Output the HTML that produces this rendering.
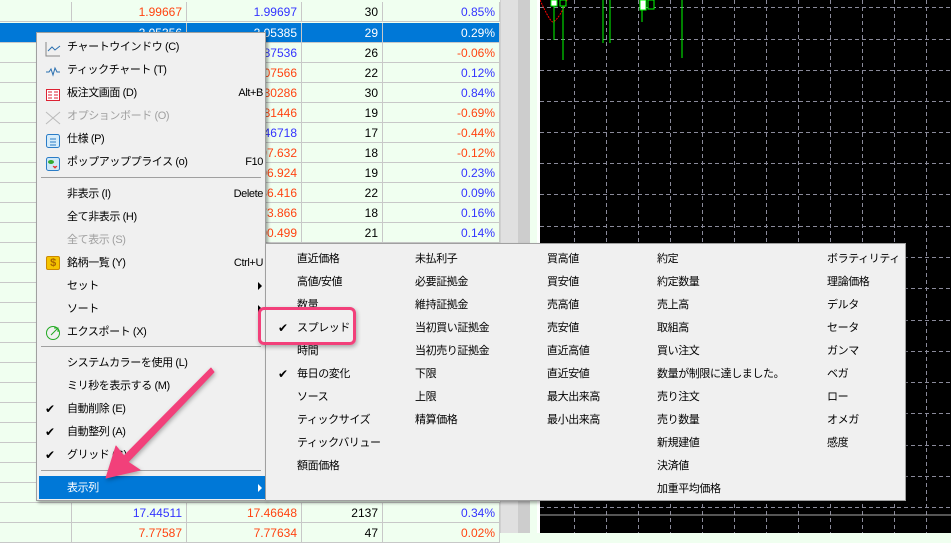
<!DOCTYPE html>
<html><head><meta charset="utf-8"><style>
*{margin:0;padding:0;box-sizing:border-box}
body{width:951px;height:533px;overflow:hidden;position:relative;background:#f0fff0;font-family:"Liberation Sans","Noto Sans CJK JP",sans-serif;font-size:12px;color:#000}
.row{position:absolute;left:0;width:500px;height:20px;border-bottom:1px solid #c8c8c8}
.c{position:absolute;top:0;height:20px;line-height:20px;text-align:right;border-right:1px solid #c8c8c8}
.r{color:#f41}.b{color:#33f}
.sel{background:#0078d7;color:#fff}
.sel .c{color:#fff}
#sb{position:absolute;left:500px;top:0;width:30px;height:533px;background:#e0e0e0;border-left:1px solid #d0d0d0}
#sb2{position:absolute;left:518px;top:0;width:12px;height:533px;background:#cdcdcd}
#chart{position:absolute;left:537px;top:0;width:414px;height:533px;background:#000;border-left:3px solid #fff}
.menu{position:absolute;background:#f0f0f0;border:1px solid #a0a0a0;box-shadow:2px 2px 3px rgba(0,0,0,.35);font-size:11px;letter-spacing:-0.4px}
.mi{position:absolute;height:22px;line-height:22px;white-space:nowrap}
.dis{color:#a0a0a0}
.sep{position:absolute;left:4px;right:4px;height:1px;background:#a0a0a0}
.sc{position:absolute;text-align:right}
.arr{position:absolute;width:0;height:0;border-top:4px solid transparent;border-bottom:4px solid transparent;border-left:4px solid #000}
.ck{position:absolute;font-size:12px}
.si{position:absolute;height:22px;line-height:22px;white-space:nowrap}
</style></head><body>

<div class="row" style="top:2px"><div class="c r" style="left:72px;width:115px;padding-right:4px">1.99667</div><div class="c b" style="left:187px;width:115px;padding-right:4px">1.99697</div><div class="c" style="left:302px;width:81px;padding-right:4px">30</div><div class="c b" style="left:383px;width:117px;padding-right:4px">0.85%</div><div class="c" style="left:0;width:72px"></div></div>
<div class="row sel" style="top:23px"><div class="c" style="left:72px;width:115px;padding-right:4px">2.05356</div><div class="c" style="left:187px;width:115px;padding-right:4px">2.05385</div><div class="c" style="left:302px;width:81px;padding-right:4px">29</div><div class="c" style="left:383px;width:117px;padding-right:4px">0.29%</div></div>
<div class="row" style="top:43px"><div class="c" style="left:0;width:72px"></div><div class="c" style="left:72px;width:115px"></div><div class="c b" style="left:187px;width:115px;padding-right:4px">1.87536</div><div class="c" style="left:302px;width:81px;padding-right:4px">26</div><div class="c r" style="left:383px;width:117px;padding-right:4px">-0.06%</div></div>
<div class="row" style="top:63px"><div class="c" style="left:0;width:72px"></div><div class="c" style="left:72px;width:115px"></div><div class="c r" style="left:187px;width:115px;padding-right:4px">1.07566</div><div class="c" style="left:302px;width:81px;padding-right:4px">22</div><div class="c b" style="left:383px;width:117px;padding-right:4px">0.12%</div></div>
<div class="row" style="top:83px"><div class="c" style="left:0;width:72px"></div><div class="c" style="left:72px;width:115px"></div><div class="c r" style="left:187px;width:115px;padding-right:4px">2.30286</div><div class="c" style="left:302px;width:81px;padding-right:4px">30</div><div class="c b" style="left:383px;width:117px;padding-right:4px">0.84%</div></div>
<div class="row" style="top:103px"><div class="c" style="left:0;width:72px"></div><div class="c" style="left:72px;width:115px"></div><div class="c r" style="left:187px;width:115px;padding-right:4px">0.81446</div><div class="c" style="left:302px;width:81px;padding-right:4px">19</div><div class="c r" style="left:383px;width:117px;padding-right:4px">-0.69%</div></div>
<div class="row" style="top:123px"><div class="c" style="left:0;width:72px"></div><div class="c" style="left:72px;width:115px"></div><div class="c b" style="left:187px;width:115px;padding-right:4px">0.46718</div><div class="c" style="left:302px;width:81px;padding-right:4px">17</div><div class="c r" style="left:383px;width:117px;padding-right:4px">-0.44%</div></div>
<div class="row" style="top:143px"><div class="c" style="left:0;width:72px"></div><div class="c" style="left:72px;width:115px"></div><div class="c r" style="left:187px;width:115px;padding-right:4px">97.632</div><div class="c" style="left:302px;width:81px;padding-right:4px">18</div><div class="c r" style="left:383px;width:117px;padding-right:4px">-0.12%</div></div>
<div class="row" style="top:163px"><div class="c" style="left:0;width:72px"></div><div class="c" style="left:72px;width:115px"></div><div class="c r" style="left:187px;width:115px;padding-right:4px">106.924</div><div class="c" style="left:302px;width:81px;padding-right:4px">19</div><div class="c b" style="left:383px;width:117px;padding-right:4px">0.23%</div></div>
<div class="row" style="top:183px"><div class="c" style="left:0;width:72px"></div><div class="c" style="left:72px;width:115px"></div><div class="c r" style="left:187px;width:115px;padding-right:4px">186.416</div><div class="c" style="left:302px;width:81px;padding-right:4px">22</div><div class="c b" style="left:383px;width:117px;padding-right:4px">0.09%</div></div>
<div class="row" style="top:203px"><div class="c" style="left:0;width:72px"></div><div class="c" style="left:72px;width:115px"></div><div class="c r" style="left:187px;width:115px;padding-right:4px">173.866</div><div class="c" style="left:302px;width:81px;padding-right:4px">18</div><div class="c b" style="left:383px;width:117px;padding-right:4px">0.16%</div></div>
<div class="row" style="top:223px"><div class="c" style="left:0;width:72px"></div><div class="c" style="left:72px;width:115px"></div><div class="c r" style="left:187px;width:115px;padding-right:4px">200.499</div><div class="c" style="left:302px;width:81px;padding-right:4px">21</div><div class="c b" style="left:383px;width:117px;padding-right:4px">0.14%</div></div>
<div class="row" style="top:243px"></div><div class="row" style="top:263px"></div><div class="row" style="top:283px"></div><div class="row" style="top:303px"></div><div class="row" style="top:323px"></div><div class="row" style="top:343px"></div><div class="row" style="top:363px"></div><div class="row" style="top:383px"></div><div class="row" style="top:403px"></div><div class="row" style="top:423px"></div><div class="row" style="top:443px"></div><div class="row" style="top:463px"></div><div class="row" style="top:483px"></div>
<div class="row" style="top:503px"><div class="c" style="left:0;width:72px"></div><div class="c b" style="left:72px;width:115px;padding-right:4px">17.44511</div><div class="c r" style="left:187px;width:115px;padding-right:4px">17.46648</div><div class="c" style="left:302px;width:81px;padding-right:4px">2137</div><div class="c b" style="left:383px;width:117px;padding-right:4px">0.34%</div></div>
<div class="row" style="top:523px"><div class="c" style="left:0;width:72px"></div><div class="c r" style="left:72px;width:115px;padding-right:4px">7.77587</div><div class="c r" style="left:187px;width:115px;padding-right:4px">7.77634</div><div class="c" style="left:302px;width:81px;padding-right:4px">47</div><div class="c r" style="left:383px;width:117px;padding-right:4px">0.02%</div></div>

<div id="sb"></div><div id="sb2"></div>

<div id="chart">
<svg width="414" height="533" style="position:absolute;left:0;top:0">
<g stroke="#8a8a9a" stroke-width="1" stroke-dasharray="4,3">
<line x1="0" y1="7.5" x2="414" y2="7.5"/><line x1="0" y1="39.5" x2="414" y2="39.5"/><line x1="0" y1="70.5" x2="414" y2="70.5"/><line x1="0" y1="101.5" x2="414" y2="101.5"/><line x1="0" y1="132.5" x2="414" y2="132.5"/><line x1="0" y1="163.5" x2="414" y2="163.5"/><line x1="0" y1="194.5" x2="414" y2="194.5"/><line x1="0" y1="226.5" x2="414" y2="226.5"/><line x1="0" y1="257.5" x2="414" y2="257.5"/><line x1="0" y1="288.5" x2="414" y2="288.5"/><line x1="0" y1="320.5" x2="414" y2="320.5"/><line x1="0" y1="351.5" x2="414" y2="351.5"/><line x1="0" y1="382.5" x2="414" y2="382.5"/><line x1="0" y1="413.5" x2="414" y2="413.5"/><line x1="0" y1="445.5" x2="414" y2="445.5"/><line x1="0" y1="476.5" x2="414" y2="476.5"/><line x1="0" y1="507.5" x2="414" y2="507.5"/>
<line x1="34.5" y1="0" x2="34.5" y2="533"/><line x1="66.5" y1="0" x2="66.5" y2="533"/><line x1="98.5" y1="0" x2="98.5" y2="533"/><line x1="130.5" y1="0" x2="130.5" y2="533"/><line x1="162.5" y1="0" x2="162.5" y2="533"/><line x1="194.5" y1="0" x2="194.5" y2="533"/><line x1="226.5" y1="0" x2="226.5" y2="533"/><line x1="258.5" y1="0" x2="258.5" y2="533"/><line x1="290.5" y1="0" x2="290.5" y2="533"/><line x1="322.5" y1="0" x2="322.5" y2="533"/><line x1="354.5" y1="0" x2="354.5" y2="533"/><line x1="386.5" y1="0" x2="386.5" y2="533"/>
</g>
<line x1="0" y1="515" x2="414" y2="515" stroke="#aaa"/>
<path d="M0 0 Q10 22 13 22 Q20 18 27 0" stroke="#f00" fill="none" stroke-dasharray="2,1"/>
<g stroke="#0f0" fill="#fff"><line x1="14" y1="0" x2="14" y2="40"/><line x1="23" y1="0" x2="23" y2="60"/><line x1="63" y1="0" x2="63" y2="43"/><line x1="70" y1="0" x2="70" y2="43"/><line x1="102" y1="0" x2="102" y2="22"/><line x1="142" y1="0" x2="142" y2="58"/><rect x="11" y="0" width="6" height="6"/><rect x="20" y="0" width="6" height="6" fill="#000"/><rect x="100" y="0" width="6" height="10"/><rect x="108" y="0" width="6" height="9" fill="#000"/></g>
</svg>
</div>

<div class="menu" style="left:36px;top:32px;width:230px;height:469px">
 <svg style="position:absolute;left:8px;top:8px" width="16" height="16"><path d="M1 1V15H15" stroke="#888" fill="none"/><path d="M3 10L7 6L10 9L15 5" stroke="#2a6fb0" fill="none"/></svg>
 <div class="mi" style="left:30px;top:3px">チャートウインドウ (C)</div>
 <svg style="position:absolute;left:8px;top:31px" width="16" height="16"><path d="M1 8H4L6 5L8 11L10 4L12 8H15" stroke="#2a6fb0" fill="none"/></svg>
 <div class="mi" style="left:30px;top:26px">ティックチャート (T)</div>
 <svg style="position:absolute;left:8px;top:54px" width="16" height="16"><rect x="1.5" y="2.5" width="13" height="11" fill="#fff" stroke="#d23"/><path d="M3 5H7M3 8H7M3 11H7M9 5H13M9 8H13M9 11H13" stroke="#d23"/></svg>
 <div class="mi" style="left:30px;top:49px">板注文画面 (D)</div><div class="mi sc" style="top:49px;right:2px">Alt+B</div>
 <svg style="position:absolute;left:8px;top:77px" width="16" height="16"><path d="M1 2L15 14M15 2L1 14" stroke="#bbb" fill="none"/></svg>
 <div class="mi dis" style="left:30px;top:72px">オプションボード (O)</div>
 <svg style="position:absolute;left:8px;top:100px" width="16" height="16"><rect x="1.5" y="1.5" width="13" height="13" rx="2" fill="#d6ecfa" stroke="#2a7cc7"/><path d="M5 6H11M5 9H11M5 12H11" stroke="#2a7cc7"/></svg>
 <div class="mi" style="left:30px;top:95px">仕様 (P)</div>
 <svg style="position:absolute;left:8px;top:123px" width="16" height="16"><rect x="1.5" y="1.5" width="13" height="13" rx="2" fill="#cfe8f7" stroke="#2a7cc7"/><ellipse cx="6" cy="6" rx="3" ry="2" fill="#3a3"/><path d="M8 10L10 12L12 10" stroke="#d33" fill="#f66"/></svg>
 <div class="mi" style="left:30px;top:118px">ポップアッププライス (o)</div><div class="mi sc" style="top:118px;right:2px">F10</div>
 <div class="sep" style="top:144px"></div>
 <div class="mi" style="left:30px;top:150px">非表示 (I)</div><div class="mi sc" style="top:150px;right:2px">Delete</div>
 <div class="mi" style="left:30px;top:173px">全て非表示 (H)</div>
 <div class="mi dis" style="left:30px;top:196px">全て表示 (S)</div>
 <div style="position:absolute;left:9px;top:223px;width:14px;height:14px;background:#f5c400;border:1px solid #c80;border-radius:2px;color:#a60;font-size:11px;line-height:12px;text-align:center;font-weight:bold">$</div>
 <div class="mi" style="left:30px;top:219px">銘柄一覧 (Y)</div><div class="mi sc" style="top:219px;right:2px">Ctrl+U</div>
 <div class="mi" style="left:30px;top:242px">セット</div><div class="arr" style="left:221px;top:249px"></div>
 <div class="mi" style="left:30px;top:265px">ソート</div><div class="arr" style="left:221px;top:272px"></div>
 <svg style="position:absolute;left:8px;top:292px" width="16" height="16"><circle cx="8" cy="8" r="6.5" stroke="#2a2" fill="none"/><path d="M6 10L13 3M9 3H13V7" stroke="#2a2" fill="none"/></svg>
 <div class="mi" style="left:30px;top:288px">エクスポート (X)</div>
 <div class="sep" style="top:313px"></div>
 <div class="mi" style="left:30px;top:319px">システムカラーを使用 (L)</div>
 <div class="mi" style="left:30px;top:342px">ミリ秒を表示する (M)</div>
 <div class="ck" style="left:8px;top:369px">✔</div><div class="mi" style="left:30px;top:365px">自動削除 (E)</div>
 <div class="ck" style="left:8px;top:392px">✔</div><div class="mi" style="left:30px;top:388px">自動整列 (A)</div>
 <div class="ck" style="left:8px;top:415px">✔</div><div class="mi" style="left:30px;top:411px">グリッド (G)</div>
 <div class="sep" style="top:437px"></div>
 <div style="position:absolute;left:2px;top:443px;width:226px;height:23px;background:#0078d7"></div>
 <div class="mi" style="left:30px;top:444px;color:#fff">表示列</div>
 <div class="arr" style="left:221px;top:451px;border-left-color:#fff"></div>
</div>

<div class="menu" style="left:265px;top:243px;width:641px;height:258px">
 <div class="si" style="left:31px;top:4px">直近価格</div>
 <div class="si" style="left:31px;top:27px">高値/安値</div>
 <div class="si" style="left:31px;top:50px">数量</div>
 <div class="ck" style="left:12px;top:77px">✔</div><div class="si" style="left:31px;top:73px">スプレッド</div>
 <div class="si" style="left:31px;top:96px">時間</div>
 <div class="ck" style="left:12px;top:123px">✔</div><div class="si" style="left:31px;top:119px">毎日の変化</div>
 <div class="si" style="left:31px;top:142px">ソース</div>
 <div class="si" style="left:31px;top:165px">ティックサイズ</div>
 <div class="si" style="left:31px;top:188px">ティックバリュー</div>
 <div class="si" style="left:31px;top:211px">額面価格</div>

 <div class="si" style="left:149px;top:4px">未払利子</div>
 <div class="si" style="left:149px;top:27px">必要証拠金</div>
 <div class="si" style="left:149px;top:50px">維持証拠金</div>
 <div class="si" style="left:149px;top:73px">当初買い証拠金</div>
 <div class="si" style="left:149px;top:96px">当初売り証拠金</div>
 <div class="si" style="left:149px;top:119px">下限</div>
 <div class="si" style="left:149px;top:142px">上限</div>
 <div class="si" style="left:149px;top:165px">精算価格</div>

 <div class="si" style="left:281px;top:4px">買高値</div>
 <div class="si" style="left:281px;top:27px">買安値</div>
 <div class="si" style="left:281px;top:50px">売高値</div>
 <div class="si" style="left:281px;top:73px">売安値</div>
 <div class="si" style="left:281px;top:96px">直近高値</div>
 <div class="si" style="left:281px;top:119px">直近安値</div>
 <div class="si" style="left:281px;top:142px">最大出来高</div>
 <div class="si" style="left:281px;top:165px">最小出来高</div>

 <div class="si" style="left:391px;top:4px">約定</div>
 <div class="si" style="left:391px;top:27px">約定数量</div>
 <div class="si" style="left:391px;top:50px">売上高</div>
 <div class="si" style="left:391px;top:73px">取組高</div>
 <div class="si" style="left:391px;top:96px">買い注文</div>
 <div class="si" style="left:391px;top:119px">数量が制限に達しました。</div>
 <div class="si" style="left:391px;top:142px">売り注文</div>
 <div class="si" style="left:391px;top:165px">売り数量</div>
 <div class="si" style="left:391px;top:188px">新規建値</div>
 <div class="si" style="left:391px;top:211px">決済値</div>
 <div class="si" style="left:391px;top:234px">加重平均価格</div>

 <div class="si" style="left:561px;top:4px">ボラティリティ</div>
 <div class="si" style="left:561px;top:27px">理論価格</div>
 <div class="si" style="left:561px;top:50px">デルタ</div>
 <div class="si" style="left:561px;top:73px">セータ</div>
 <div class="si" style="left:561px;top:96px">ガンマ</div>
 <div class="si" style="left:561px;top:119px">ベガ</div>
 <div class="si" style="left:561px;top:142px">ロー</div>
 <div class="si" style="left:561px;top:165px">オメガ</div>
 <div class="si" style="left:561px;top:188px">感度</div>
</div>

<div style="position:absolute;left:258px;top:307px;width:98px;height:38px;border:3px solid #f2407a;border-radius:6px;box-shadow:1px 2px 4px rgba(0,0,0,.3)"></div>

<svg style="position:absolute;left:0;top:0" width="951" height="533">
<path d="M211 368 L214 372 L128 462 L140 470 L106 478 L116 446 L124 456 Z" fill="#f2407a" stroke="#f2407a" stroke-width="1" stroke-linejoin="round" style="filter:drop-shadow(1px 2px 2px rgba(0,0,0,.3))"/>
</svg>
</body></html>
